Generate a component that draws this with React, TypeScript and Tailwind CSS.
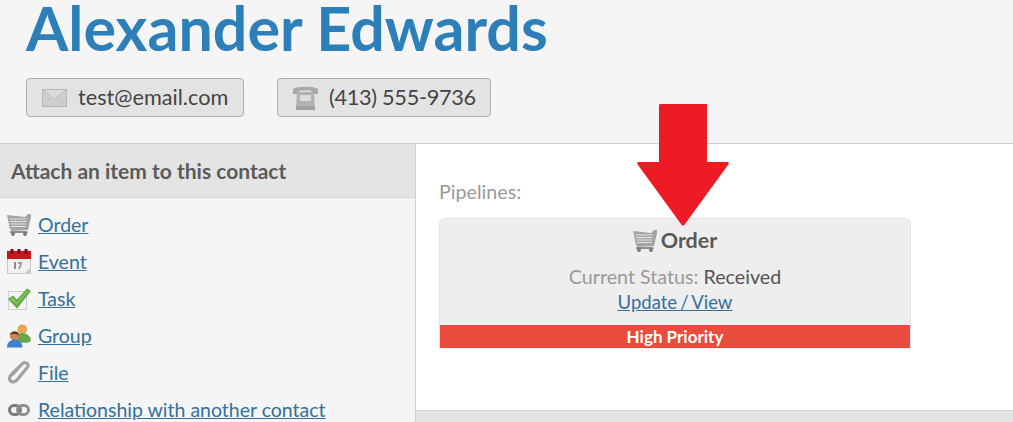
import React from "react";

const Cart = () => (
  <svg width="24" height="22" viewBox="0 0 24 22">
    <path d="M0 1 L18 3 L21 0 L24 0 L24 3 L21 16 L5 17 L3 15 Z" fill="#a3a5a4" />
    <path d="M2.500 5h17M3 7.500h16.500M3.500 10h15.500M4 12.500h14.500" stroke="#e4e4e4" strokeWidth="1.100" />
    <path d="M3 17 H20 L21 19 H3 Z" fill="#8d8f8e" />
    <circle cx="6" cy="20" r="2" fill="#7a7a7a" />
    <circle cx="18" cy="20" r="2" fill="#7a7a7a" />
  </svg>
);

const Calendar = () => (
  <svg width="24" height="25" viewBox="0 0 24 25">
    <rect x="0.500" y="2" width="23" height="22.500" fill="#f1efef" stroke="#c9c9c9" />
    <rect x="0" y="2" width="24" height="8" fill="#c8171e" />
    <rect x="3.500" y="0" width="3" height="5" fill="#7c1015" />
    <rect x="10.500" y="0" width="3" height="5" fill="#7c1015" />
    <rect x="17.500" y="0" width="3" height="5" fill="#7c1015" />
    <rect x="7" y="13" width="2" height="7" fill="#8e8e8e" />
    <path d="M11 13 H15 V15 L13 20 H11 L13 15 H11 Z" fill="#9e9e9e" />
    <path d="M17 25 L24 18 V25 Z" fill="#c5c9d6" />
  </svg>
);

const Check = () => (
  <svg width="24" height="22" viewBox="0 0 24 22">
    <rect x="1.500" y="3.500" width="18" height="18" fill="#f4f4f4" stroke="#cfcfcf" />
    <path d="M1 11 L6 7.500 L10 11.500 L20 0.500 L24 3 L10 20.500 Z" fill="#5fa845" />
    <path d="M3 11 L6 9.500 L10 14 L20 2.500 L21.500 3.500 L10 17 Z" fill="#7cc55d" />
  </svg>
);

const Group = () => (
  <svg width="25" height="25" viewBox="0 0 25 25">
    <circle cx="16" cy="6" r="5" fill="#e3a850" />
    <path d="M10 20 C10 12 13 10 16 10 C20 10 25 13 25 18 L22 20 Z" fill="#66a84a" />
    <circle cx="8" cy="13" r="5" fill="#c9875a" />
    <path d="M3 12 C4 7 12 7 13 12 C9 11 7 10 3 12 Z" fill="#5d3a21" />
    <path d="M0 25 C0 19 4 17 8 17 C12 17 16 19 16 25 Z" fill="#3f7fd0" />
  </svg>
);

const Clip = () => (
  <svg width="22" height="23" viewBox="0 0 22 23">
    <path d="M5 13 L14 3 C16 1 19 1.500 20 3.500 C20.500 5 20 6.500 18 8 L9 19 C7 21 4 21.500 2.500 20 C1 18 1.500 15.500 3.500 13.500 L11 6" fill="none" stroke="#a2a2a2" strokeWidth="3.200" strokeLinecap="round" />
  </svg>
);

const Chain = () => (
  <svg width="22" height="14" viewBox="0 0 22 14">
    <rect x="1.500" y="2.500" width="11" height="9" rx="4.500" fill="none" stroke="#7a7a7a" strokeWidth="3" />
    <rect x="9.500" y="2.500" width="11" height="9" rx="4.500" fill="none" stroke="#8e8e8e" strokeWidth="3" />
  </svg>
);

const Mail = () => (
  <svg width="25" height="18" viewBox="0 0 25 18">
    <rect x="0.500" y="0.500" width="24" height="17" fill="#cfcfcf" stroke="#b8b8b8" />
    <path d="M1 1 L12.500 10 L24 1" fill="#dadada" stroke="#bcbcbc" />
    <path d="M1 17 L9 8M24 17 L16 8" stroke="#c2c2c2" />
  </svg>
);

const Phone = () => (
  <svg width="25" height="24" viewBox="0 0 25 24">
    <path d="M0 8 V3 C4 0 21 0 25 3 V8 H18.500 V4.500 H6.500 V8 Z" fill="#a8a8a8" />
    <path d="M4 6 H21 L22 23 H3 Z" fill="#b2b2b2" />
    <rect x="7" y="9" width="11" height="6" fill="#dcdcdc" />
    <rect x="3" y="20" width="19" height="4" fill="#a0a0a0" />
  </svg>
);

const items: [React.ReactNode, string][] = [
  [<Cart />, "Order"],
  [<Calendar />, "Event"],
  [<Check />, "Task"],
  [<Group />, "Group"],
  [<Clip />, "File"],
  [<Chain />, "Relationship with another contact"],
];

export default function App() {
  return (
    <div className="relative h-[422px] w-[1013px] overflow-hidden bg-white font-['Lato','Noto_Sans',sans-serif] text-[#555]">
      <header className="h-[144px] border-b border-[#cfcfcf] bg-[#f5f5f5] pl-[26px]">
        <h1 className="h-[78px] text-[61px] leading-[56px] font-bold whitespace-nowrap text-[#2c7fb8]">Alexander Edwards</h1>
        <div className="flex gap-[33px]">
          <div className="flex h-[39px] w-[218px] items-center gap-[11px] rounded-[4px] border border-[#adadad] bg-[#e3e3e3] pl-[15px] text-[21.700px] text-[#444]">
            <Mail />
            <span>test@email.com</span>
          </div>
          <div className="flex h-[39px] w-[214px] items-center gap-[11px] rounded-[4px] border border-[#adadad] bg-[#e3e3e3] pl-[15px] text-[21.700px] tracking-[-0.3px] text-[#444]">
            <Phone />
            <span>(413) 555-9736</span>
          </div>
        </div>
      </header>
      <div className="flex h-[278px]">
        <aside className="w-[416px] shrink-0 border-r border-[#cfcfcf] bg-[#f5f5f5]">
          <div className="flex h-[54px] items-center border-b border-[#d4d4d4] bg-[#e4e4e4] pt-[1px] pl-[11px] text-[21px] font-bold text-[#5b5b5b]">
            Attach an item to this contact
          </div>
          <ul className="pt-[8px] pl-[7px]">
            {items.map(([icon, label]) => (
              <li key={label} className="flex h-[37px] items-center gap-[7px]">
                <span className="flex w-[24px] justify-center">{icon}</span>
                <a className="text-[19.500px] whitespace-nowrap text-[#33709c] underline">{label}</a>
              </li>
            ))}
          </ul>
        </aside>
        <main className="flex flex-1 flex-col">
          <div className="h-[266px] pt-[34px] pl-[23px]">
            <p className="h-[40px] text-[19.700px] leading-[27px] text-[#999]">Pipelines:</p>
            <div className="flex h-[131px] w-[472px] flex-col overflow-hidden rounded-t-[6px] border border-b-0 border-[#e2e2e2] bg-[#eeeeee] text-center">
              <div className="flex h-[41px] items-center justify-center gap-[4px] pt-[2px] text-[21.500px] font-bold text-[#5a5a5a]">
                <Cart />
                <span>Order</span>
              </div>
              <p className="h-[26px] text-[19.700px] leading-[34px] text-[#999]">
                Current Status: <span className="text-[#555]">Received</span>
              </p>
              <a className="h-[39px] text-[18.500px] leading-[32px] text-[#33709c] underline [word-spacing:-1.500px]">Update / View</a>
              <div className="h-[23px] bg-[#e74c3c] text-[17px] leading-[23px] font-bold text-white">High Priority</div>
              <div className="h-[1px] bg-[#eeeeee]" />
            </div>
          </div>
          <div className="flex-1 border-t border-[#d8d8d8] bg-[#e4e4e4]" />
        </main>
      </div>
      <svg className="absolute top-[104px] left-[637px]" width="92" height="122" viewBox="0 0 92 122">
        <path d="M22 1 C22 0 23 0 24 0 H69 C70 0 70 0 70 1 V58 H91 C92 58 92 60 91 61 L48 120 C47 122 45 122 44 120 L1 61 C0 60 0 58 1 58 H22 Z" fill="#ed1c24" />
      </svg>
    </div>
  );
}
